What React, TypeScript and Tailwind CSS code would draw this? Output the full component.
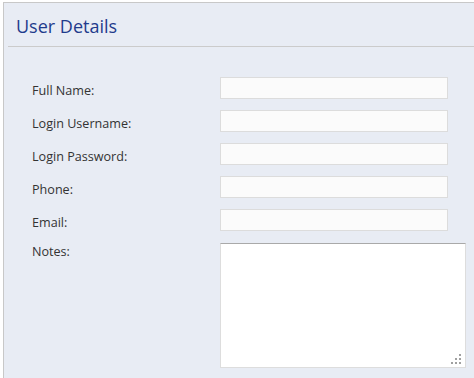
import React from "react";

const rows = ["Full Name:", "Login Username:", "Login Password:", "Phone:", "Email:"];

export default function App() {
  return (
    <div className="w-[474px] h-[378px] bg-white pl-[3px] pt-[2px] overflow-hidden" style={{ fontFamily: '"Open Sans", "Noto Sans", sans-serif' }}>
      <div className="h-full border-l border-t border-[#c8c8c8] bg-[#e8ecf4]">
        <div className="ml-[4px] h-[44px] border-b border-[#cbcbcb] pl-[8px] pt-[12px]">
          <h1 className="text-[18px] leading-[22px] text-[#1f3b8c] font-medium">User Details</h1>
        </div>
        <div className="pl-[28px] pt-[30px] grid grid-cols-[188px_246px] gap-y-[11px]">
          {rows.map((r) => (
            <React.Fragment key={r}>
              <div className="h-[22px] pt-[5px] text-[12.6px] leading-[18px] text-[#333]">{r}</div>
              <div className="h-[22px] w-[228px] border border-[#dcdcdc] bg-[#fbfbfb]" />
            </React.Fragment>
          ))}
          <div className="text-[12.6px] leading-[18px] text-[#333] pt-[1px]">Notes:</div>
          <div className="relative mt-[1px] h-[125px] w-[246px] border border-[#dddddd] border-t-[#a9a9a9] bg-white">
            <svg className="absolute right-[4px] bottom-[3px]" width="11" height="11" viewBox="0 0 11 11">
              <rect x="9" y="1" width="2" height="2" fill="#a0a0a0" />
              <rect x="5" y="5" width="2" height="2" fill="#a0a0a0" />
              <rect x="9" y="5" width="2" height="2" fill="#a0a0a0" />
              <rect x="1" y="9" width="2" height="2" fill="#a0a0a0" />
              <rect x="5" y="9" width="2" height="2" fill="#a0a0a0" />
              <rect x="9" y="9" width="2" height="2" fill="#a0a0a0" />
            </svg>
          </div>
        </div>
      </div>
    </div>
  );
}
